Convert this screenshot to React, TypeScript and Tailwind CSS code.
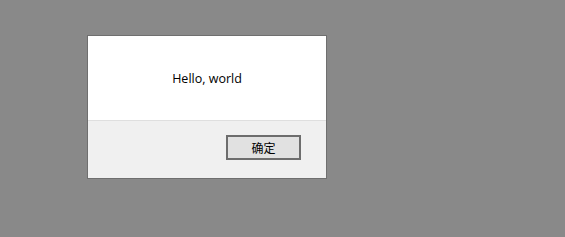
export default function App() {
  return (
    <div className="w-full h-[237px] bg-[#898989] pl-[87px] pt-[35px]" style={{ fontFamily: '"Segoe UI", "Open Sans", "Noto Sans CJK SC", sans-serif' }}>
      <div className="w-[240px] h-[144px] border border-[#6f6f6f] flex flex-col bg-white">
        <div className="h-[84px] flex items-center justify-center pt-[2px] text-[12.5px] text-black">
          Hello, world
        </div>
        <div className="flex-1 border-t border-[#dfdfdf] bg-[#f0f0f0] flex justify-end pt-[14px] pr-[25px]">
          <button className="w-[75px] h-[25px] border-2 border-[#6d6d6d] bg-[#e1e1e1] text-[12px] text-black flex items-center justify-center" style={{ fontFamily: '"Noto Sans CJK SC", sans-serif' }}>
            确定
          </button>
        </div>
      </div>
    </div>
  );
}
